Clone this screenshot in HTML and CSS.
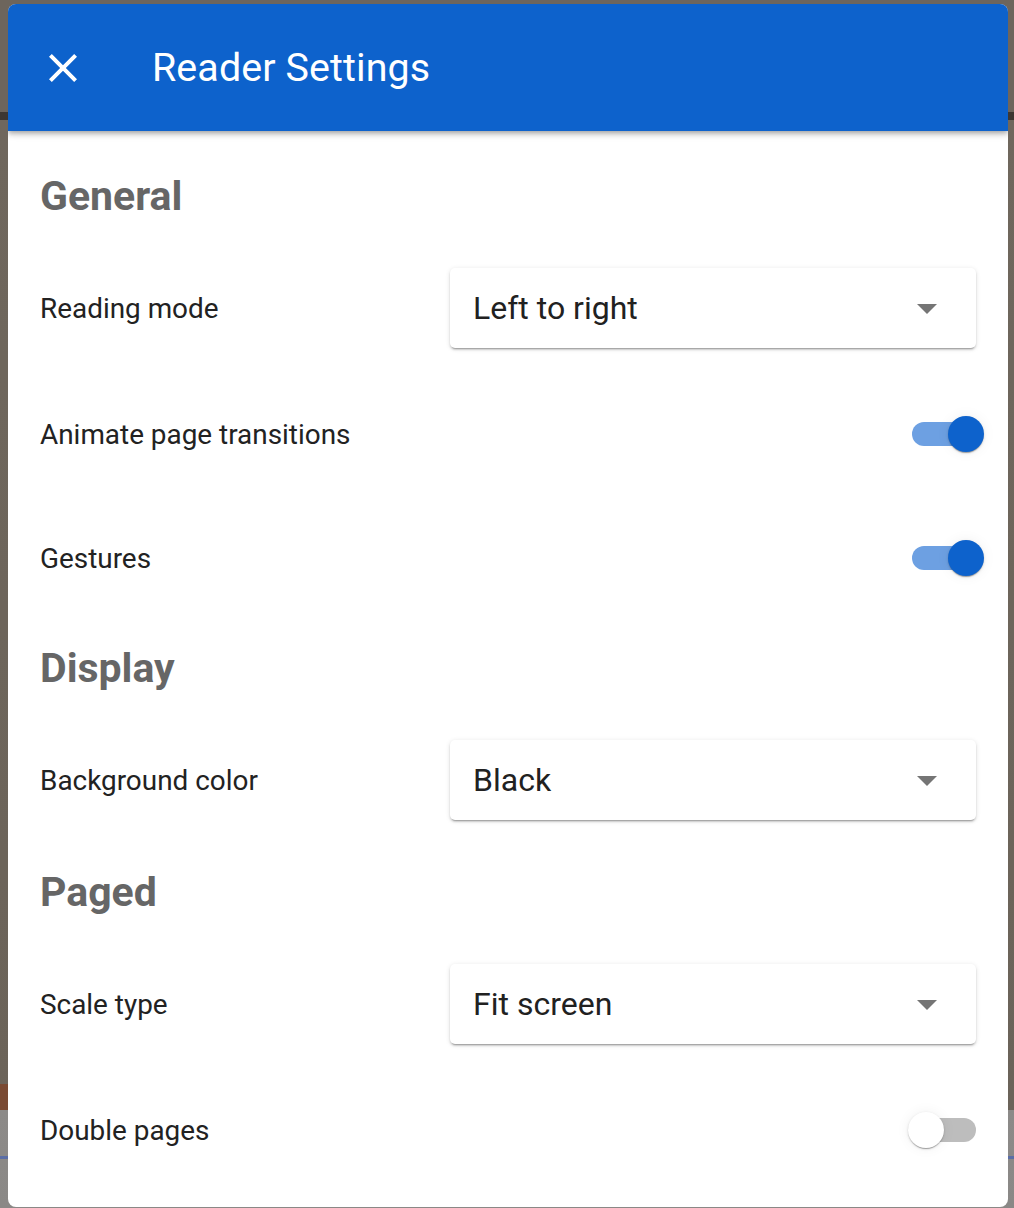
FILE: index.html
```html
<!DOCTYPE html>
<html lang="en">
<head>
<meta charset="utf-8">
<title>Reader Settings</title>
<link rel="stylesheet" href="styles.css">
</head>
<body>
<div class="backdrop">
  <div class="dialog">
    <header class="toolbar">
      <button class="icon-btn" aria-label="Close">
        <svg viewBox="0 0 24 24" width="48" height="48"><path fill="#fff" d="M19 6.41L17.59 5 12 10.59 6.41 5 5 6.41 10.59 12 5 17.59 6.41 19 12 13.41 17.59 19 19 17.59 13.41 12z"/></svg>
      </button>
      <h1 class="title">Reader Settings</h1>
    </header>
    <main class="content">
      <h2 class="section">General</h2>
      <div class="row row-select">
        <span class="label">Reading mode</span>
        <div class="select"><span>Left to right</span>
          <svg class="caret" viewBox="0 0 24 24" width="48" height="48"><path fill="#757575" d="M7 10l5 5 5-5z"/></svg>
        </div>
      </div>
      <div class="row row-toggle">
        <span class="label">Animate page transitions</span>
        <div class="toggle on"><span class="thumb"></span></div>
      </div>
      <div class="row row-toggle">
        <span class="label">Gestures</span>
        <div class="toggle on"><span class="thumb"></span></div>
      </div>
      <h2 class="section">Display</h2>
      <div class="row row-select">
        <span class="label">Background color</span>
        <div class="select"><span>Black</span>
          <svg class="caret" viewBox="0 0 24 24" width="48" height="48"><path fill="#757575" d="M7 10l5 5 5-5z"/></svg>
        </div>
      </div>
      <h2 class="section">Paged</h2>
      <div class="row row-select">
        <span class="label">Scale type</span>
        <div class="select"><span>Fit screen</span>
          <svg class="caret" viewBox="0 0 24 24" width="48" height="48"><path fill="#757575" d="M7 10l5 5 5-5z"/></svg>
        </div>
      </div>
      <div class="row row-toggle">
        <span class="label">Double pages</span>
        <div class="toggle"><span class="thumb"></span></div>
      </div>
    </main>
  </div>
</div>
</body>
</html>
```

FILE: styles.css
```css
* { box-sizing: border-box; }

html, body {
  margin: 0;
  padding: 0;
  height: 1208px;
  overflow: hidden;
}

body {
  font-family: Roboto, "Noto Sans", "Liberation Sans", sans-serif;
  background:
    linear-gradient(#7a4a33, #7a4a33) no-repeat 0 1084px / 8px 26px,
    linear-gradient(to bottom,
      transparent 0, transparent 1156px,
      #5b6ea6 1156px, #5b6ea6 1159px,
      transparent 1159px),
    linear-gradient(to bottom,
      #6d655c 0, #6d655c 112px,
      #3d3732 112px, #3d3732 120px,
      #6f675d 120px, #6b6359 1110px,
      #8c8a88 1110px, #8a8886 1208px);
}

.backdrop {
  padding: 4px 6px 0 8px;
}

.dialog {
  width: 1000px;
  height: 1203px;
  background: #fff;
  border-radius: 8px;
  overflow: hidden;
  display: flex;
  flex-direction: column;
}

.toolbar {
  height: 127px;
  flex: none;
  background: #0d62cc;
  display: flex;
  align-items: center;
  padding-left: 31px;
  box-shadow: 0 2px 4px -1px rgba(0,0,0,.2), 0 4px 5px 0 rgba(0,0,0,.14), 0 1px 10px 0 rgba(0,0,0,.12);
  position: relative;
  z-index: 1;
}

.icon-btn {
  width: 48px;
  height: 48px;
  padding: 0;
  border: 0;
  background: transparent;
  display: flex;
}

.title {
  margin: 0 0 0 65px;
  font-size: 39.4px;
  font-weight: 400;
  color: #fff;
  letter-spacing: 0.1px;
}

.content {
  padding: 41px 32px 0 32px;
  display: flex;
  flex-direction: column;
  gap: 48px;
}

.section {
  margin: 0;
  height: 48px;
  line-height: 48px;
  font-size: 41px;
  font-weight: 700;
  color: #666666;
}

.row {
  display: flex;
  align-items: center;
  justify-content: space-between;
}

.row-select { height: 80px; }
.row-toggle { height: 76px; }

.label {
  font-size: 27.9px;
  color: #222222;
}

.select {
  width: 526px;
  height: 80px;
  border-radius: 5px;
  background: #fff;
  box-shadow: 0 3px 1px -2px rgba(0,0,0,.2), 0 2px 2px 0 rgba(0,0,0,.14), 0 1px 5px 0 rgba(0,0,0,.12);
  display: flex;
  align-items: center;
  justify-content: space-between;
  padding: 0 25px 0 23px;
  font-size: 32px;
  color: #212121;
}

.caret { flex: none; }

.toggle {
  position: relative;
  width: 64px;
  height: 24px;
  border-radius: 12px;
  background: #bdbdbd;
}

.toggle.on {
  background: #6da0e2;
}

.thumb {
  position: absolute;
  top: -6px;
  left: -4px;
  width: 36px;
  height: 36px;
  border-radius: 50%;
  background: #fff;
  box-shadow: 0 2px 1px -1px rgba(0,0,0,.2), 0 1px 1px 0 rgba(0,0,0,.14), 0 1px 3px 0 rgba(0,0,0,.12), 0 0 14px rgba(0,0,0,.06);
}

.toggle.on .thumb {
  left: 36px;
  background: #0d62cc;
}
```
